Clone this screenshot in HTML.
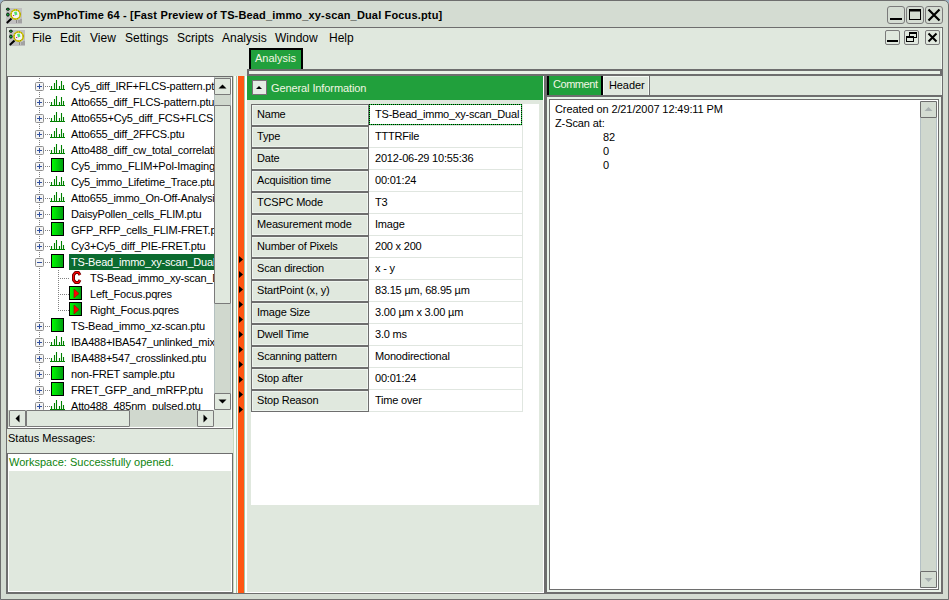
<!DOCTYPE html>
<html><head><meta charset="utf-8">
<style>
*{margin:0;padding:0;box-sizing:border-box}
html,body{width:949px;height:600px;overflow:hidden;background:#9cb4c8}
body{position:relative;font-family:"Liberation Sans",sans-serif;font-size:11px;color:#000}
.a{position:absolute}
.t{position:absolute;white-space:pre;line-height:13px;letter-spacing:-0.2px}
svg{position:absolute;overflow:visible}
</style></head><body>
<div class="a" style="left:0;top:0;width:949px;height:600px;background:#d4dcd2;border:1px solid #6e6e6e;border-radius:5px 5px 0 0"></div>
<svg style="left:4px;top:4px" width="18" height="18" viewBox="0 0 18 18">
<rect x="2" y="4" width="16" height="16" fill="#c0c0c0"/>
<ellipse cx="3.9" cy="5.2" rx="1.5" ry="1.1" fill="#10c040" stroke="#000" stroke-width="0.9"/>
<ellipse cx="3.9" cy="10.6" rx="1.3" ry="1.6" fill="#10c040" stroke="#000" stroke-width="0.9"/>
<line x1="7.5" y1="14.5" x2="2.8" y2="19" stroke="#000" stroke-width="2"/>
<circle cx="11.6" cy="10.5" r="4.6" fill="#f4f4f4" stroke="#d8d000" stroke-width="1.7"/>
<circle cx="11.6" cy="10.5" r="4.6" fill="none" stroke="#504000" stroke-width="0.8" stroke-dasharray="0.8 1.6"/>
<path d="M10 8 L12.5 7.5 L13.5 10.5 L11 11.5Z" fill="#50e070"/>
<rect x="9" y="11" width="1.2" height="1" fill="#c02080"/>
<path d="M12.5 16v3M15 16v3M17 15v4" stroke="#808080" stroke-width="0.9"/>
</svg>
<div class="t" style="left:33px;top:8px;font-weight:bold;letter-spacing:0.16px;line-height:14px">SymPhoTime 64 - [Fast Preview of TS-Bead_immo_xy-scan_Dual Focus.ptu]</div>
<div class="a" style="left:887px;top:6px;width:18px;height:18px;border:1px solid #7a7a7a;border-radius:3px;background:#d4dcd2"></div>
<div class="a" style="left:906px;top:6px;width:18px;height:18px;border:1px solid #7a7a7a;border-radius:3px;background:#d4dcd2"></div>
<div class="a" style="left:925px;top:6px;width:18px;height:18px;border:1px solid #7a7a7a;border-radius:3px;background:#d4dcd2"></div>
<svg style="left:887px;top:6px" width="18" height="18"><rect x="3" y="12" width="12" height="2" fill="#000"/></svg>
<svg style="left:906px;top:6px" width="18" height="18"><rect x="3.5" y="3.5" width="11" height="10" fill="none" stroke="#000" stroke-width="1"/><rect x="3" y="3" width="12" height="2.5" fill="#000"/></svg>
<svg style="left:925px;top:6px" width="18" height="18"><path d="M3.5 3.5 L14.5 14.5 M14.5 3.5 L3.5 14.5" stroke="#000" stroke-width="2.2"/></svg>
<div class="a" style="left:6px;top:27px;width:937px;height:567px;background:#e0e8de;border-left:1px solid #6e6e6e;border-top:1px solid #6e6e6e;border-right:1px solid #6e6e6e;border-bottom:2px solid #6e6e6e;box-shadow:inset -1px 0 #eef6ee"></div>
<svg style="left:7px;top:26px" width="18" height="18" viewBox="0 0 18 18">
<rect x="2" y="4" width="16" height="16" fill="#c0c0c0"/>
<ellipse cx="3.9" cy="5.2" rx="1.5" ry="1.1" fill="#10c040" stroke="#000" stroke-width="0.9"/>
<ellipse cx="3.9" cy="10.6" rx="1.3" ry="1.6" fill="#10c040" stroke="#000" stroke-width="0.9"/>
<line x1="7.5" y1="14.5" x2="2.8" y2="19" stroke="#000" stroke-width="2"/>
<circle cx="11.6" cy="10.5" r="4.6" fill="#f4f4f4" stroke="#d8d000" stroke-width="1.7"/>
<circle cx="11.6" cy="10.5" r="4.6" fill="none" stroke="#504000" stroke-width="0.8" stroke-dasharray="0.8 1.6"/>
<path d="M10 8 L12.5 7.5 L13.5 10.5 L11 11.5Z" fill="#50e070"/>
<rect x="9" y="11" width="1.2" height="1" fill="#c02080"/>
<path d="M12.5 16v3M15 16v3M17 15v4" stroke="#808080" stroke-width="0.9"/>
</svg>
<div class="t" style="left:32px;top:31px;font-size:12px;line-height:15px;letter-spacing:0">File</div>
<div class="t" style="left:60px;top:31px;font-size:12px;line-height:15px;letter-spacing:0">Edit</div>
<div class="t" style="left:90px;top:31px;font-size:12px;line-height:15px;letter-spacing:0">View</div>
<div class="t" style="left:125px;top:31px;font-size:12px;line-height:15px;letter-spacing:0">Settings</div>
<div class="t" style="left:177px;top:31px;font-size:12px;line-height:15px;letter-spacing:0">Scripts</div>
<div class="t" style="left:222px;top:31px;font-size:12px;line-height:15px;letter-spacing:0">Analysis</div>
<div class="t" style="left:275px;top:31px;font-size:12px;line-height:15px;letter-spacing:0">Window</div>
<div class="t" style="left:329px;top:31px;font-size:12px;line-height:15px;letter-spacing:0">Help</div>
<div class="a" style="left:885px;top:30px;width:15px;height:15px;border:1px solid #7a7a7a;border-radius:2px;background:#e0e8de"></div>
<div class="a" style="left:904px;top:30px;width:15px;height:15px;border:1px solid #7a7a7a;border-radius:2px;background:#e0e8de"></div>
<div class="a" style="left:925px;top:30px;width:15px;height:15px;border:1px solid #7a7a7a;border-radius:2px;background:#e0e8de"></div>
<svg style="left:885px;top:30px" width="15" height="15"><rect x="2" y="10" width="11" height="2" fill="#000"/></svg>
<svg style="left:904px;top:30px" width="15" height="15"><rect x="5.5" y="2.5" width="7" height="5" fill="none" stroke="#000"/><rect x="5" y="2" width="8" height="2" fill="#000"/><rect x="2.5" y="6.5" width="7" height="5" fill="#e0e8de" stroke="#000"/><rect x="2" y="6" width="8" height="2" fill="#000"/></svg>
<svg style="left:925px;top:30px" width="15" height="15"><path d="M3.5 3.5 L11.5 11.5 M11.5 3.5 L3.5 11.5" stroke="#000" stroke-width="2"/></svg>
<div class="a" style="left:249px;top:48px;width:54px;height:22px;background:#21a03c;border:2px solid #000;border-bottom:0"></div>
<div class="t" style="left:255px;top:52px;color:#f2f6e4;letter-spacing:0">Analysis</div>
<div class="a" style="left:247px;top:69px;width:695px;height:7px;background:#e8f0e6;border-top:2px solid #6e6e6e;border-left:2px solid #6e6e6e;border-bottom:2px solid #6e6e6e;border-right:2px solid #6e6e6e"></div>
<div class="a" style="left:7px;top:76px;width:226px;height:353px;background:#fff;border:1px solid #6e6e6e"></div>
<div class="a" style="left:8px;top:77px;width:206px;height:333px;overflow:hidden">
<svg style="left:0;top:0" width="206" height="333">
<rect x="31" y="1" width="1" height="1" fill="#808080"/>
<rect x="31" y="3" width="1" height="1" fill="#808080"/>
<rect x="31" y="5" width="1" height="1" fill="#808080"/>
<rect x="31" y="7" width="1" height="1" fill="#808080"/>
<rect x="31" y="9" width="1" height="1" fill="#808080"/>
<rect x="31" y="11" width="1" height="1" fill="#808080"/>
<rect x="31" y="13" width="1" height="1" fill="#808080"/>
<rect x="31" y="15" width="1" height="1" fill="#808080"/>
<rect x="31" y="17" width="1" height="1" fill="#808080"/>
<rect x="31" y="19" width="1" height="1" fill="#808080"/>
<rect x="31" y="21" width="1" height="1" fill="#808080"/>
<rect x="31" y="23" width="1" height="1" fill="#808080"/>
<rect x="31" y="25" width="1" height="1" fill="#808080"/>
<rect x="31" y="27" width="1" height="1" fill="#808080"/>
<rect x="31" y="29" width="1" height="1" fill="#808080"/>
<rect x="31" y="31" width="1" height="1" fill="#808080"/>
<rect x="31" y="33" width="1" height="1" fill="#808080"/>
<rect x="31" y="35" width="1" height="1" fill="#808080"/>
<rect x="31" y="37" width="1" height="1" fill="#808080"/>
<rect x="31" y="39" width="1" height="1" fill="#808080"/>
<rect x="31" y="41" width="1" height="1" fill="#808080"/>
<rect x="31" y="43" width="1" height="1" fill="#808080"/>
<rect x="31" y="45" width="1" height="1" fill="#808080"/>
<rect x="31" y="47" width="1" height="1" fill="#808080"/>
<rect x="31" y="49" width="1" height="1" fill="#808080"/>
<rect x="31" y="51" width="1" height="1" fill="#808080"/>
<rect x="31" y="53" width="1" height="1" fill="#808080"/>
<rect x="31" y="55" width="1" height="1" fill="#808080"/>
<rect x="31" y="57" width="1" height="1" fill="#808080"/>
<rect x="31" y="59" width="1" height="1" fill="#808080"/>
<rect x="31" y="61" width="1" height="1" fill="#808080"/>
<rect x="31" y="63" width="1" height="1" fill="#808080"/>
<rect x="31" y="65" width="1" height="1" fill="#808080"/>
<rect x="31" y="67" width="1" height="1" fill="#808080"/>
<rect x="31" y="69" width="1" height="1" fill="#808080"/>
<rect x="31" y="71" width="1" height="1" fill="#808080"/>
<rect x="31" y="73" width="1" height="1" fill="#808080"/>
<rect x="31" y="75" width="1" height="1" fill="#808080"/>
<rect x="31" y="77" width="1" height="1" fill="#808080"/>
<rect x="31" y="79" width="1" height="1" fill="#808080"/>
<rect x="31" y="81" width="1" height="1" fill="#808080"/>
<rect x="31" y="83" width="1" height="1" fill="#808080"/>
<rect x="31" y="85" width="1" height="1" fill="#808080"/>
<rect x="31" y="87" width="1" height="1" fill="#808080"/>
<rect x="31" y="89" width="1" height="1" fill="#808080"/>
<rect x="31" y="91" width="1" height="1" fill="#808080"/>
<rect x="31" y="93" width="1" height="1" fill="#808080"/>
<rect x="31" y="95" width="1" height="1" fill="#808080"/>
<rect x="31" y="97" width="1" height="1" fill="#808080"/>
<rect x="31" y="99" width="1" height="1" fill="#808080"/>
<rect x="31" y="101" width="1" height="1" fill="#808080"/>
<rect x="31" y="103" width="1" height="1" fill="#808080"/>
<rect x="31" y="105" width="1" height="1" fill="#808080"/>
<rect x="31" y="107" width="1" height="1" fill="#808080"/>
<rect x="31" y="109" width="1" height="1" fill="#808080"/>
<rect x="31" y="111" width="1" height="1" fill="#808080"/>
<rect x="31" y="113" width="1" height="1" fill="#808080"/>
<rect x="31" y="115" width="1" height="1" fill="#808080"/>
<rect x="31" y="117" width="1" height="1" fill="#808080"/>
<rect x="31" y="119" width="1" height="1" fill="#808080"/>
<rect x="31" y="121" width="1" height="1" fill="#808080"/>
<rect x="31" y="123" width="1" height="1" fill="#808080"/>
<rect x="31" y="125" width="1" height="1" fill="#808080"/>
<rect x="31" y="127" width="1" height="1" fill="#808080"/>
<rect x="31" y="129" width="1" height="1" fill="#808080"/>
<rect x="31" y="131" width="1" height="1" fill="#808080"/>
<rect x="31" y="133" width="1" height="1" fill="#808080"/>
<rect x="31" y="135" width="1" height="1" fill="#808080"/>
<rect x="31" y="137" width="1" height="1" fill="#808080"/>
<rect x="31" y="139" width="1" height="1" fill="#808080"/>
<rect x="31" y="141" width="1" height="1" fill="#808080"/>
<rect x="31" y="143" width="1" height="1" fill="#808080"/>
<rect x="31" y="145" width="1" height="1" fill="#808080"/>
<rect x="31" y="147" width="1" height="1" fill="#808080"/>
<rect x="31" y="149" width="1" height="1" fill="#808080"/>
<rect x="31" y="151" width="1" height="1" fill="#808080"/>
<rect x="31" y="153" width="1" height="1" fill="#808080"/>
<rect x="31" y="155" width="1" height="1" fill="#808080"/>
<rect x="31" y="157" width="1" height="1" fill="#808080"/>
<rect x="31" y="159" width="1" height="1" fill="#808080"/>
<rect x="31" y="161" width="1" height="1" fill="#808080"/>
<rect x="31" y="163" width="1" height="1" fill="#808080"/>
<rect x="31" y="165" width="1" height="1" fill="#808080"/>
<rect x="31" y="167" width="1" height="1" fill="#808080"/>
<rect x="31" y="169" width="1" height="1" fill="#808080"/>
<rect x="31" y="171" width="1" height="1" fill="#808080"/>
<rect x="31" y="173" width="1" height="1" fill="#808080"/>
<rect x="31" y="175" width="1" height="1" fill="#808080"/>
<rect x="31" y="177" width="1" height="1" fill="#808080"/>
<rect x="31" y="179" width="1" height="1" fill="#808080"/>
<rect x="31" y="181" width="1" height="1" fill="#808080"/>
<rect x="31" y="183" width="1" height="1" fill="#808080"/>
<rect x="31" y="185" width="1" height="1" fill="#808080"/>
<rect x="31" y="187" width="1" height="1" fill="#808080"/>
<rect x="31" y="189" width="1" height="1" fill="#808080"/>
<rect x="31" y="191" width="1" height="1" fill="#808080"/>
<rect x="31" y="193" width="1" height="1" fill="#808080"/>
<rect x="31" y="195" width="1" height="1" fill="#808080"/>
<rect x="31" y="197" width="1" height="1" fill="#808080"/>
<rect x="31" y="199" width="1" height="1" fill="#808080"/>
<rect x="31" y="201" width="1" height="1" fill="#808080"/>
<rect x="31" y="203" width="1" height="1" fill="#808080"/>
<rect x="31" y="205" width="1" height="1" fill="#808080"/>
<rect x="31" y="207" width="1" height="1" fill="#808080"/>
<rect x="31" y="209" width="1" height="1" fill="#808080"/>
<rect x="31" y="211" width="1" height="1" fill="#808080"/>
<rect x="31" y="213" width="1" height="1" fill="#808080"/>
<rect x="31" y="215" width="1" height="1" fill="#808080"/>
<rect x="31" y="217" width="1" height="1" fill="#808080"/>
<rect x="31" y="219" width="1" height="1" fill="#808080"/>
<rect x="31" y="221" width="1" height="1" fill="#808080"/>
<rect x="31" y="223" width="1" height="1" fill="#808080"/>
<rect x="31" y="225" width="1" height="1" fill="#808080"/>
<rect x="31" y="227" width="1" height="1" fill="#808080"/>
<rect x="31" y="229" width="1" height="1" fill="#808080"/>
<rect x="31" y="231" width="1" height="1" fill="#808080"/>
<rect x="31" y="233" width="1" height="1" fill="#808080"/>
<rect x="31" y="235" width="1" height="1" fill="#808080"/>
<rect x="31" y="237" width="1" height="1" fill="#808080"/>
<rect x="31" y="239" width="1" height="1" fill="#808080"/>
<rect x="31" y="241" width="1" height="1" fill="#808080"/>
<rect x="31" y="243" width="1" height="1" fill="#808080"/>
<rect x="31" y="245" width="1" height="1" fill="#808080"/>
<rect x="31" y="247" width="1" height="1" fill="#808080"/>
<rect x="31" y="249" width="1" height="1" fill="#808080"/>
<rect x="31" y="251" width="1" height="1" fill="#808080"/>
<rect x="31" y="253" width="1" height="1" fill="#808080"/>
<rect x="31" y="255" width="1" height="1" fill="#808080"/>
<rect x="31" y="257" width="1" height="1" fill="#808080"/>
<rect x="31" y="259" width="1" height="1" fill="#808080"/>
<rect x="31" y="261" width="1" height="1" fill="#808080"/>
<rect x="31" y="263" width="1" height="1" fill="#808080"/>
<rect x="31" y="265" width="1" height="1" fill="#808080"/>
<rect x="31" y="267" width="1" height="1" fill="#808080"/>
<rect x="31" y="269" width="1" height="1" fill="#808080"/>
<rect x="31" y="271" width="1" height="1" fill="#808080"/>
<rect x="31" y="273" width="1" height="1" fill="#808080"/>
<rect x="31" y="275" width="1" height="1" fill="#808080"/>
<rect x="31" y="277" width="1" height="1" fill="#808080"/>
<rect x="31" y="279" width="1" height="1" fill="#808080"/>
<rect x="31" y="281" width="1" height="1" fill="#808080"/>
<rect x="31" y="283" width="1" height="1" fill="#808080"/>
<rect x="31" y="285" width="1" height="1" fill="#808080"/>
<rect x="31" y="287" width="1" height="1" fill="#808080"/>
<rect x="31" y="289" width="1" height="1" fill="#808080"/>
<rect x="31" y="291" width="1" height="1" fill="#808080"/>
<rect x="31" y="293" width="1" height="1" fill="#808080"/>
<rect x="31" y="295" width="1" height="1" fill="#808080"/>
<rect x="31" y="297" width="1" height="1" fill="#808080"/>
<rect x="31" y="299" width="1" height="1" fill="#808080"/>
<rect x="31" y="301" width="1" height="1" fill="#808080"/>
<rect x="31" y="303" width="1" height="1" fill="#808080"/>
<rect x="31" y="305" width="1" height="1" fill="#808080"/>
<rect x="31" y="307" width="1" height="1" fill="#808080"/>
<rect x="31" y="309" width="1" height="1" fill="#808080"/>
<rect x="31" y="311" width="1" height="1" fill="#808080"/>
<rect x="31" y="313" width="1" height="1" fill="#808080"/>
<rect x="31" y="315" width="1" height="1" fill="#808080"/>
<rect x="31" y="317" width="1" height="1" fill="#808080"/>
<rect x="31" y="319" width="1" height="1" fill="#808080"/>
<rect x="31" y="321" width="1" height="1" fill="#808080"/>
<rect x="31" y="323" width="1" height="1" fill="#808080"/>
<rect x="31" y="325" width="1" height="1" fill="#808080"/>
<rect x="31" y="327" width="1" height="1" fill="#808080"/>
<rect x="31" y="329" width="1" height="1" fill="#808080"/>
<rect x="31" y="331" width="1" height="1" fill="#808080"/>
<rect x="50" y="193" width="1" height="1" fill="#808080"/>
<rect x="50" y="195" width="1" height="1" fill="#808080"/>
<rect x="50" y="197" width="1" height="1" fill="#808080"/>
<rect x="50" y="199" width="1" height="1" fill="#808080"/>
<rect x="50" y="201" width="1" height="1" fill="#808080"/>
<rect x="50" y="203" width="1" height="1" fill="#808080"/>
<rect x="50" y="205" width="1" height="1" fill="#808080"/>
<rect x="50" y="207" width="1" height="1" fill="#808080"/>
<rect x="50" y="209" width="1" height="1" fill="#808080"/>
<rect x="50" y="211" width="1" height="1" fill="#808080"/>
<rect x="50" y="213" width="1" height="1" fill="#808080"/>
<rect x="50" y="215" width="1" height="1" fill="#808080"/>
<rect x="50" y="217" width="1" height="1" fill="#808080"/>
<rect x="50" y="219" width="1" height="1" fill="#808080"/>
<rect x="50" y="221" width="1" height="1" fill="#808080"/>
<rect x="50" y="223" width="1" height="1" fill="#808080"/>
<rect x="50" y="225" width="1" height="1" fill="#808080"/>
<rect x="50" y="227" width="1" height="1" fill="#808080"/>
<rect x="50" y="229" width="1" height="1" fill="#808080"/>
<rect x="50" y="231" width="1" height="1" fill="#808080"/>
<rect x="50" y="233" width="1" height="1" fill="#808080"/>
</svg>
<svg style="left:37px;top:9px" width="6" height="1"><rect x="0" y="0" width="1" height="1" fill="#808080"/><rect x="2" y="0" width="1" height="1" fill="#808080"/><rect x="4" y="0" width="1" height="1" fill="#808080"/></svg>
<svg style="left:27px;top:5px" width="9" height="9"><rect x="0.5" y="0.5" width="8" height="8" rx="1" fill="#f4f4f4" stroke="#909090"/><rect x="2" y="4" width="5" height="1" fill="#3050a0"/><rect x="4" y="2" width="1" height="5" fill="#3050a0"/></svg>
<svg style="left:42px;top:3px" width="16" height="12"><path d="M0 9.5H15M1.5 10V6M4.5 10V3M6.5 10V0M9.5 10V6M11.5 10V1M13.5 10V5" stroke="#008000" stroke-width="1.1" fill="none"/></svg>
<div class="t" style="left:63px;top:3px;">Cy5_diff_IRF+FLCS-pattern.ptu</div>
<svg style="left:37px;top:25px" width="6" height="1"><rect x="0" y="0" width="1" height="1" fill="#808080"/><rect x="2" y="0" width="1" height="1" fill="#808080"/><rect x="4" y="0" width="1" height="1" fill="#808080"/></svg>
<svg style="left:27px;top:21px" width="9" height="9"><rect x="0.5" y="0.5" width="8" height="8" rx="1" fill="#f4f4f4" stroke="#909090"/><rect x="2" y="4" width="5" height="1" fill="#3050a0"/><rect x="4" y="2" width="1" height="5" fill="#3050a0"/></svg>
<svg style="left:42px;top:19px" width="16" height="12"><path d="M0 9.5H15M1.5 10V6M4.5 10V3M6.5 10V0M9.5 10V6M11.5 10V1M13.5 10V5" stroke="#008000" stroke-width="1.1" fill="none"/></svg>
<div class="t" style="left:63px;top:19px;">Atto655_diff_FLCS-pattern.ptu</div>
<svg style="left:37px;top:41px" width="6" height="1"><rect x="0" y="0" width="1" height="1" fill="#808080"/><rect x="2" y="0" width="1" height="1" fill="#808080"/><rect x="4" y="0" width="1" height="1" fill="#808080"/></svg>
<svg style="left:27px;top:37px" width="9" height="9"><rect x="0.5" y="0.5" width="8" height="8" rx="1" fill="#f4f4f4" stroke="#909090"/><rect x="2" y="4" width="5" height="1" fill="#3050a0"/><rect x="4" y="2" width="1" height="5" fill="#3050a0"/></svg>
<svg style="left:42px;top:35px" width="16" height="12"><path d="M0 9.5H15M1.5 10V6M4.5 10V3M6.5 10V0M9.5 10V6M11.5 10V1M13.5 10V5" stroke="#008000" stroke-width="1.1" fill="none"/></svg>
<div class="t" style="left:63px;top:35px;">Atto655+Cy5_diff_FCS+FLCS.ptu</div>
<svg style="left:37px;top:57px" width="6" height="1"><rect x="0" y="0" width="1" height="1" fill="#808080"/><rect x="2" y="0" width="1" height="1" fill="#808080"/><rect x="4" y="0" width="1" height="1" fill="#808080"/></svg>
<svg style="left:27px;top:53px" width="9" height="9"><rect x="0.5" y="0.5" width="8" height="8" rx="1" fill="#f4f4f4" stroke="#909090"/><rect x="2" y="4" width="5" height="1" fill="#3050a0"/><rect x="4" y="2" width="1" height="5" fill="#3050a0"/></svg>
<svg style="left:42px;top:51px" width="16" height="12"><path d="M0 9.5H15M1.5 10V6M4.5 10V3M6.5 10V0M9.5 10V6M11.5 10V1M13.5 10V5" stroke="#008000" stroke-width="1.1" fill="none"/></svg>
<div class="t" style="left:63px;top:51px;">Atto655_diff_2FFCS.ptu</div>
<svg style="left:37px;top:73px" width="6" height="1"><rect x="0" y="0" width="1" height="1" fill="#808080"/><rect x="2" y="0" width="1" height="1" fill="#808080"/><rect x="4" y="0" width="1" height="1" fill="#808080"/></svg>
<svg style="left:27px;top:69px" width="9" height="9"><rect x="0.5" y="0.5" width="8" height="8" rx="1" fill="#f4f4f4" stroke="#909090"/><rect x="2" y="4" width="5" height="1" fill="#3050a0"/><rect x="4" y="2" width="1" height="5" fill="#3050a0"/></svg>
<svg style="left:42px;top:67px" width="16" height="12"><path d="M0 9.5H15M1.5 10V6M4.5 10V3M6.5 10V0M9.5 10V6M11.5 10V1M13.5 10V5" stroke="#008000" stroke-width="1.1" fill="none"/></svg>
<div class="t" style="left:63px;top:67px;">Atto488_diff_cw_total_correlation.ptu</div>
<svg style="left:37px;top:89px" width="6" height="1"><rect x="0" y="0" width="1" height="1" fill="#808080"/><rect x="2" y="0" width="1" height="1" fill="#808080"/><rect x="4" y="0" width="1" height="1" fill="#808080"/></svg>
<svg style="left:27px;top:85px" width="9" height="9"><rect x="0.5" y="0.5" width="8" height="8" rx="1" fill="#f4f4f4" stroke="#909090"/><rect x="2" y="4" width="5" height="1" fill="#3050a0"/><rect x="4" y="2" width="1" height="5" fill="#3050a0"/></svg>
<svg style="left:43px;top:81px" width="13" height="14"><defs><linearGradient id="g" x1="0" y1="0" x2="1" y2="0"><stop offset="0" stop-color="#00ff00"/><stop offset="1" stop-color="#009c10"/></linearGradient></defs><rect x="0.5" y="0.5" width="12" height="13" fill="url(#g)" stroke="#000"/></svg>
<div class="t" style="left:63px;top:83px;">Cy5_immo_FLIM+Pol-Imaging.ptu</div>
<svg style="left:37px;top:105px" width="6" height="1"><rect x="0" y="0" width="1" height="1" fill="#808080"/><rect x="2" y="0" width="1" height="1" fill="#808080"/><rect x="4" y="0" width="1" height="1" fill="#808080"/></svg>
<svg style="left:27px;top:101px" width="9" height="9"><rect x="0.5" y="0.5" width="8" height="8" rx="1" fill="#f4f4f4" stroke="#909090"/><rect x="2" y="4" width="5" height="1" fill="#3050a0"/><rect x="4" y="2" width="1" height="5" fill="#3050a0"/></svg>
<svg style="left:42px;top:99px" width="16" height="12"><path d="M0 9.5H15M1.5 10V6M4.5 10V3M6.5 10V0M9.5 10V6M11.5 10V1M13.5 10V5" stroke="#008000" stroke-width="1.1" fill="none"/></svg>
<div class="t" style="left:63px;top:99px;">Cy5_immo_Lifetime_Trace.ptu</div>
<svg style="left:37px;top:121px" width="6" height="1"><rect x="0" y="0" width="1" height="1" fill="#808080"/><rect x="2" y="0" width="1" height="1" fill="#808080"/><rect x="4" y="0" width="1" height="1" fill="#808080"/></svg>
<svg style="left:27px;top:117px" width="9" height="9"><rect x="0.5" y="0.5" width="8" height="8" rx="1" fill="#f4f4f4" stroke="#909090"/><rect x="2" y="4" width="5" height="1" fill="#3050a0"/><rect x="4" y="2" width="1" height="5" fill="#3050a0"/></svg>
<svg style="left:42px;top:115px" width="16" height="12"><path d="M0 9.5H15M1.5 10V6M4.5 10V3M6.5 10V0M9.5 10V6M11.5 10V1M13.5 10V5" stroke="#008000" stroke-width="1.1" fill="none"/></svg>
<div class="t" style="left:63px;top:115px;">Atto655_immo_On-Off-Analysis.ptu</div>
<svg style="left:37px;top:137px" width="6" height="1"><rect x="0" y="0" width="1" height="1" fill="#808080"/><rect x="2" y="0" width="1" height="1" fill="#808080"/><rect x="4" y="0" width="1" height="1" fill="#808080"/></svg>
<svg style="left:27px;top:133px" width="9" height="9"><rect x="0.5" y="0.5" width="8" height="8" rx="1" fill="#f4f4f4" stroke="#909090"/><rect x="2" y="4" width="5" height="1" fill="#3050a0"/><rect x="4" y="2" width="1" height="5" fill="#3050a0"/></svg>
<svg style="left:43px;top:129px" width="13" height="14"><defs><linearGradient id="g" x1="0" y1="0" x2="1" y2="0"><stop offset="0" stop-color="#00ff00"/><stop offset="1" stop-color="#009c10"/></linearGradient></defs><rect x="0.5" y="0.5" width="12" height="13" fill="url(#g)" stroke="#000"/></svg>
<div class="t" style="left:63px;top:131px;">DaisyPollen_cells_FLIM.ptu</div>
<svg style="left:37px;top:153px" width="6" height="1"><rect x="0" y="0" width="1" height="1" fill="#808080"/><rect x="2" y="0" width="1" height="1" fill="#808080"/><rect x="4" y="0" width="1" height="1" fill="#808080"/></svg>
<svg style="left:27px;top:149px" width="9" height="9"><rect x="0.5" y="0.5" width="8" height="8" rx="1" fill="#f4f4f4" stroke="#909090"/><rect x="2" y="4" width="5" height="1" fill="#3050a0"/><rect x="4" y="2" width="1" height="5" fill="#3050a0"/></svg>
<svg style="left:43px;top:145px" width="13" height="14"><defs><linearGradient id="g" x1="0" y1="0" x2="1" y2="0"><stop offset="0" stop-color="#00ff00"/><stop offset="1" stop-color="#009c10"/></linearGradient></defs><rect x="0.5" y="0.5" width="12" height="13" fill="url(#g)" stroke="#000"/></svg>
<div class="t" style="left:63px;top:147px;">GFP_RFP_cells_FLIM-FRET.ptu</div>
<svg style="left:37px;top:169px" width="6" height="1"><rect x="0" y="0" width="1" height="1" fill="#808080"/><rect x="2" y="0" width="1" height="1" fill="#808080"/><rect x="4" y="0" width="1" height="1" fill="#808080"/></svg>
<svg style="left:27px;top:165px" width="9" height="9"><rect x="0.5" y="0.5" width="8" height="8" rx="1" fill="#f4f4f4" stroke="#909090"/><rect x="2" y="4" width="5" height="1" fill="#3050a0"/><rect x="4" y="2" width="1" height="5" fill="#3050a0"/></svg>
<svg style="left:42px;top:163px" width="16" height="12"><path d="M0 9.5H15M1.5 10V6M4.5 10V3M6.5 10V0M9.5 10V6M11.5 10V1M13.5 10V5" stroke="#008000" stroke-width="1.1" fill="none"/></svg>
<div class="t" style="left:63px;top:163px;">Cy3+Cy5_diff_PIE-FRET.ptu</div>
<svg style="left:37px;top:185px" width="6" height="1"><rect x="0" y="0" width="1" height="1" fill="#808080"/><rect x="2" y="0" width="1" height="1" fill="#808080"/><rect x="4" y="0" width="1" height="1" fill="#808080"/></svg>
<svg style="left:27px;top:181px" width="9" height="9"><rect x="0.5" y="0.5" width="8" height="8" rx="1" fill="#f4f4f4" stroke="#909090"/><rect x="2" y="4" width="5" height="1" fill="#3050a0"/></svg>
<svg style="left:43px;top:177px" width="13" height="14"><defs><linearGradient id="g" x1="0" y1="0" x2="1" y2="0"><stop offset="0" stop-color="#00ff00"/><stop offset="1" stop-color="#009c10"/></linearGradient></defs><rect x="0.5" y="0.5" width="12" height="13" fill="url(#g)" stroke="#000"/></svg>
<div class="a" style="left:61px;top:177px;width:145px;height:16px;background:#0c6b30;"></div>
<div class="t" style="left:63px;top:179px;color:#fff">TS-Bead_immo_xy-scan_Dual Focus.ptu</div>
<svg style="left:52px;top:201px" width="10" height="1"><rect x="0" y="0" width="1" height="1" fill="#808080"/><rect x="2" y="0" width="1" height="1" fill="#808080"/><rect x="4" y="0" width="1" height="1" fill="#808080"/><rect x="6" y="0" width="1" height="1" fill="#808080"/><rect x="8" y="0" width="1" height="1" fill="#808080"/></svg>
<svg style="left:63px;top:194px" width="12" height="14"><path d="M9 4 L7.5 1.5 L4.5 1.5 L2.5 4 L2.5 9 L4.5 11.5 L7.5 11.5 L9 9" stroke="#700000" stroke-width="3" fill="none" stroke-linejoin="round"/><path d="M9 4 L7.5 1.5 L4.5 1.5 L2.5 4 L2.5 9 L4.5 11.5 L7.5 11.5 L9 9" stroke="#ff0000" stroke-width="1.1" fill="none"/></svg>
<div class="t" style="left:82px;top:195px;">TS-Bead_immo_xy-scan_Dual Focus.pcfs</div>
<svg style="left:52px;top:217px" width="10" height="1"><rect x="0" y="0" width="1" height="1" fill="#808080"/><rect x="2" y="0" width="1" height="1" fill="#808080"/><rect x="4" y="0" width="1" height="1" fill="#808080"/><rect x="6" y="0" width="1" height="1" fill="#808080"/><rect x="8" y="0" width="1" height="1" fill="#808080"/></svg>
<svg style="left:61px;top:209px" width="13" height="14"><defs><linearGradient id="g2" x1="0" y1="0" x2="1" y2="0"><stop offset="0" stop-color="#00ff00"/><stop offset="1" stop-color="#009c10"/></linearGradient></defs><rect x="0.5" y="0.5" width="12" height="13" fill="url(#g2)" stroke="#000"/><path d="M5 3 L10 7.5 L5 12Z" fill="#ff0000" stroke="#a00000" stroke-width="0.6"/></svg>
<div class="t" style="left:82px;top:211px;">Left_Focus.pqres</div>
<svg style="left:52px;top:233px" width="10" height="1"><rect x="0" y="0" width="1" height="1" fill="#808080"/><rect x="2" y="0" width="1" height="1" fill="#808080"/><rect x="4" y="0" width="1" height="1" fill="#808080"/><rect x="6" y="0" width="1" height="1" fill="#808080"/><rect x="8" y="0" width="1" height="1" fill="#808080"/></svg>
<svg style="left:61px;top:225px" width="13" height="14"><defs><linearGradient id="g2" x1="0" y1="0" x2="1" y2="0"><stop offset="0" stop-color="#00ff00"/><stop offset="1" stop-color="#009c10"/></linearGradient></defs><rect x="0.5" y="0.5" width="12" height="13" fill="url(#g2)" stroke="#000"/><path d="M5 3 L10 7.5 L5 12Z" fill="#ff0000" stroke="#a00000" stroke-width="0.6"/></svg>
<div class="t" style="left:82px;top:227px;">Right_Focus.pqres</div>
<svg style="left:37px;top:249px" width="6" height="1"><rect x="0" y="0" width="1" height="1" fill="#808080"/><rect x="2" y="0" width="1" height="1" fill="#808080"/><rect x="4" y="0" width="1" height="1" fill="#808080"/></svg>
<svg style="left:27px;top:245px" width="9" height="9"><rect x="0.5" y="0.5" width="8" height="8" rx="1" fill="#f4f4f4" stroke="#909090"/><rect x="2" y="4" width="5" height="1" fill="#3050a0"/><rect x="4" y="2" width="1" height="5" fill="#3050a0"/></svg>
<svg style="left:43px;top:241px" width="13" height="14"><defs><linearGradient id="g" x1="0" y1="0" x2="1" y2="0"><stop offset="0" stop-color="#00ff00"/><stop offset="1" stop-color="#009c10"/></linearGradient></defs><rect x="0.5" y="0.5" width="12" height="13" fill="url(#g)" stroke="#000"/></svg>
<div class="t" style="left:63px;top:243px;">TS-Bead_immo_xz-scan.ptu</div>
<svg style="left:37px;top:265px" width="6" height="1"><rect x="0" y="0" width="1" height="1" fill="#808080"/><rect x="2" y="0" width="1" height="1" fill="#808080"/><rect x="4" y="0" width="1" height="1" fill="#808080"/></svg>
<svg style="left:27px;top:261px" width="9" height="9"><rect x="0.5" y="0.5" width="8" height="8" rx="1" fill="#f4f4f4" stroke="#909090"/><rect x="2" y="4" width="5" height="1" fill="#3050a0"/><rect x="4" y="2" width="1" height="5" fill="#3050a0"/></svg>
<svg style="left:42px;top:259px" width="16" height="12"><path d="M0 9.5H15M1.5 10V6M4.5 10V3M6.5 10V0M9.5 10V6M11.5 10V1M13.5 10V5" stroke="#008000" stroke-width="1.1" fill="none"/></svg>
<div class="t" style="left:63px;top:259px;">IBA488+IBA547_unlinked_mix.ptu</div>
<svg style="left:37px;top:281px" width="6" height="1"><rect x="0" y="0" width="1" height="1" fill="#808080"/><rect x="2" y="0" width="1" height="1" fill="#808080"/><rect x="4" y="0" width="1" height="1" fill="#808080"/></svg>
<svg style="left:27px;top:277px" width="9" height="9"><rect x="0.5" y="0.5" width="8" height="8" rx="1" fill="#f4f4f4" stroke="#909090"/><rect x="2" y="4" width="5" height="1" fill="#3050a0"/><rect x="4" y="2" width="1" height="5" fill="#3050a0"/></svg>
<svg style="left:42px;top:275px" width="16" height="12"><path d="M0 9.5H15M1.5 10V6M4.5 10V3M6.5 10V0M9.5 10V6M11.5 10V1M13.5 10V5" stroke="#008000" stroke-width="1.1" fill="none"/></svg>
<div class="t" style="left:63px;top:275px;">IBA488+547_crosslinked.ptu</div>
<svg style="left:37px;top:297px" width="6" height="1"><rect x="0" y="0" width="1" height="1" fill="#808080"/><rect x="2" y="0" width="1" height="1" fill="#808080"/><rect x="4" y="0" width="1" height="1" fill="#808080"/></svg>
<svg style="left:27px;top:293px" width="9" height="9"><rect x="0.5" y="0.5" width="8" height="8" rx="1" fill="#f4f4f4" stroke="#909090"/><rect x="2" y="4" width="5" height="1" fill="#3050a0"/><rect x="4" y="2" width="1" height="5" fill="#3050a0"/></svg>
<svg style="left:43px;top:289px" width="13" height="14"><defs><linearGradient id="g" x1="0" y1="0" x2="1" y2="0"><stop offset="0" stop-color="#00ff00"/><stop offset="1" stop-color="#009c10"/></linearGradient></defs><rect x="0.5" y="0.5" width="12" height="13" fill="url(#g)" stroke="#000"/></svg>
<div class="t" style="left:63px;top:291px;">non-FRET sample.ptu</div>
<svg style="left:37px;top:313px" width="6" height="1"><rect x="0" y="0" width="1" height="1" fill="#808080"/><rect x="2" y="0" width="1" height="1" fill="#808080"/><rect x="4" y="0" width="1" height="1" fill="#808080"/></svg>
<svg style="left:27px;top:309px" width="9" height="9"><rect x="0.5" y="0.5" width="8" height="8" rx="1" fill="#f4f4f4" stroke="#909090"/><rect x="2" y="4" width="5" height="1" fill="#3050a0"/><rect x="4" y="2" width="1" height="5" fill="#3050a0"/></svg>
<svg style="left:43px;top:305px" width="13" height="14"><defs><linearGradient id="g" x1="0" y1="0" x2="1" y2="0"><stop offset="0" stop-color="#00ff00"/><stop offset="1" stop-color="#009c10"/></linearGradient></defs><rect x="0.5" y="0.5" width="12" height="13" fill="url(#g)" stroke="#000"/></svg>
<div class="t" style="left:63px;top:307px;">FRET_GFP_and_mRFP.ptu</div>
<svg style="left:37px;top:329px" width="6" height="1"><rect x="0" y="0" width="1" height="1" fill="#808080"/><rect x="2" y="0" width="1" height="1" fill="#808080"/><rect x="4" y="0" width="1" height="1" fill="#808080"/></svg>
<svg style="left:27px;top:325px" width="9" height="9"><rect x="0.5" y="0.5" width="8" height="8" rx="1" fill="#f4f4f4" stroke="#909090"/><rect x="2" y="4" width="5" height="1" fill="#3050a0"/><rect x="4" y="2" width="1" height="5" fill="#3050a0"/></svg>
<svg style="left:42px;top:323px" width="16" height="12"><path d="M0 9.5H15M1.5 10V6M4.5 10V3M6.5 10V0M9.5 10V6M11.5 10V1M13.5 10V5" stroke="#008000" stroke-width="1.1" fill="none"/></svg>
<div class="t" style="left:63px;top:323px;">Atto488_485nm_pulsed.ptu</div>
</div>
<div class="a" style="left:214px;top:77px;width:17px;height:333px;background:#d0d8ce;border-left:1px solid #b4c0c0;border-right:1px solid #b4c0c0"></div>
<div class="a" style="left:214px;top:78px;width:17px;height:17px;background:#e0e8de;border:1px solid #7a7a7a;border-radius:1px"></div>
<svg style="left:214px;top:78px" width="17" height="17"><path d="M4.5 10.5 L8.5 6.5 L12.5 10.5Z" fill="#000"/></svg>
<div class="a" style="left:214px;top:105px;width:17px;height:199px;background:#e0e8de;border:1px solid #7a7a7a;border-radius:1px"></div>
<svg style="left:214px;top:105px" width="17" height="199"><path d="" fill="#000"/></svg>
<div class="a" style="left:214px;top:393px;width:17px;height:17px;background:#e0e8de;border:1px solid #7a7a7a;border-radius:1px"></div>
<svg style="left:214px;top:393px" width="17" height="17"><path d="M4.5 6.5 L8.5 10.5 L12.5 6.5Z" fill="#000"/></svg>
<div class="a" style="left:8px;top:410px;width:206px;height:17px;background:#d0d8ce"></div>
<div class="a" style="left:9px;top:410px;width:17px;height:17px;background:#e0e8de;border:1px solid #7a7a7a;border-radius:1px"></div>
<svg style="left:9px;top:410px" width="17" height="17"><path d="M10.5 4.5 L6.5 8.5 L10.5 12.5Z" fill="#000"/></svg>
<div class="a" style="left:26px;top:410px;width:104px;height:17px;background:#e0e8de;border:1px solid #7a7a7a;border-radius:1px"></div>
<svg style="left:26px;top:410px" width="104" height="17"><path d="" fill="#000"/></svg>
<div class="a" style="left:197px;top:410px;width:17px;height:17px;background:#e0e8de;border:1px solid #7a7a7a;border-radius:1px"></div>
<svg style="left:197px;top:410px" width="17" height="17"><path d="M6.5 4.5 L10.5 8.5 L6.5 12.5Z" fill="#000"/></svg>
<div class="a" style="left:214px;top:410px;width:17px;height:17px;background:#e0e8de;"></div>
<div class="t" style="left:8px;top:432px;letter-spacing:0">Status Messages:</div>
<div class="a" style="left:7px;top:453px;width:226px;height:141px;background:#e0e8de;border:1px solid #6e6e6e;border-bottom:2px solid #6e6e6e;box-shadow:inset 1px 0 #fff,inset -1px -1px #fff"></div>
<div class="a" style="left:8px;top:454px;width:224px;height:17px;background:#fff;"></div>
<div class="t" style="left:9px;top:456px;color:#0e840e;letter-spacing:0">Workspace: Successfully opened.</div>
<div class="a" style="left:233px;top:76px;width:1px;height:517px;background:#c8d8c0;"></div>
<div class="a" style="left:234px;top:76px;width:2px;height:517px;background:#f8fcf8;"></div>
<div class="a" style="left:236px;top:76px;width:1px;height:517px;background:#a8c0a0;"></div>
<div class="a" style="left:237px;top:76px;width:1px;height:517px;background:#f0f8f0;"></div>
<div class="a" style="left:238px;top:76px;width:6px;height:517px;background:#ff5714;"></div>
<div class="a" style="left:244px;top:76px;width:1px;height:517px;background:#a8c8a8;"></div>
<div class="a" style="left:245px;top:76px;width:2px;height:517px;background:#fff;"></div>
<svg style="left:238px;top:0" width="6" height="600"><path d="M1 255.9 L5 259.5 L1 263.1Z" fill="#000"/><path d="M1 270.9 L5 274.5 L1 278.1Z" fill="#000"/><path d="M1 285.9 L5 289.5 L1 293.1Z" fill="#000"/><path d="M1 300.9 L5 304.5 L1 308.1Z" fill="#000"/><path d="M1 315.9 L5 319.5 L1 323.1Z" fill="#000"/><path d="M1 330.9 L5 334.5 L1 338.1Z" fill="#000"/><path d="M1 345.9 L5 349.5 L1 353.1Z" fill="#000"/><path d="M1 360.9 L5 364.5 L1 368.1Z" fill="#000"/><path d="M1 375.9 L5 379.5 L1 383.1Z" fill="#000"/><path d="M1 390.9 L5 394.5 L1 398.1Z" fill="#000"/><path d="M1 405.9 L5 409.5 L1 413.1Z" fill="#000"/></svg>
<div class="a" style="left:247px;top:76px;width:297px;height:517px;background:#e0e8de;"></div>
<div class="a" style="left:543px;top:76px;width:1px;height:517px;background:#fff;"></div>
<div class="a" style="left:247px;top:592px;width:297px;height:1px;background:#fff;"></div>
<div class="a" style="left:247px;top:76px;width:296px;height:24px;background:#21a03c;"></div>
<div class="a" style="left:252px;top:80px;width:15px;height:15px;background:#e4ece4;border:1px solid #7a7078"></div>
<svg style="left:252px;top:80px" width="15" height="15"><path d="M4 9 L7 6 L10 9Z" fill="#000"/></svg>
<div class="t" style="left:271px;top:82px;color:#f2f6e4;letter-spacing:-0.1px">General Information</div>
<div class="a" style="left:251px;top:104px;width:288px;height:401px;background:#fff;"></div>
<div class="a" style="left:251px;top:104px;width:118px;height:22px;background:#e0e8de;border:1px solid #6e6e6e;box-shadow:inset 1px 1px #eef4ee,inset -1px -1px #eef4ee"></div>
<div class="t" style="left:257px;top:108px;">Name</div>
<div class="a" style="left:369px;top:104px;width:154px;height:22px;border-right:1px solid #e0e6e0;border-bottom:1px solid #e0e6e0"></div>
<div class="t" style="left:375px;top:108px;width:146px;overflow:hidden">TS-Bead_immo_xy-scan_Dual Focus.ptu</div>
<div class="a" style="left:251px;top:126px;width:118px;height:22px;background:#e0e8de;border:1px solid #6e6e6e;box-shadow:inset 1px 1px #eef4ee,inset -1px -1px #eef4ee"></div>
<div class="t" style="left:257px;top:130px;">Type</div>
<div class="a" style="left:369px;top:126px;width:154px;height:22px;border-right:1px solid #e0e6e0;border-bottom:1px solid #e0e6e0"></div>
<div class="t" style="left:375px;top:130px;width:146px;overflow:hidden">TTTRFile</div>
<div class="a" style="left:251px;top:148px;width:118px;height:22px;background:#e0e8de;border:1px solid #6e6e6e;box-shadow:inset 1px 1px #eef4ee,inset -1px -1px #eef4ee"></div>
<div class="t" style="left:257px;top:152px;">Date</div>
<div class="a" style="left:369px;top:148px;width:154px;height:22px;border-right:1px solid #e0e6e0;border-bottom:1px solid #e0e6e0"></div>
<div class="t" style="left:375px;top:152px;width:146px;overflow:hidden">2012-06-29 10:55:36</div>
<div class="a" style="left:251px;top:170px;width:118px;height:22px;background:#e0e8de;border:1px solid #6e6e6e;box-shadow:inset 1px 1px #eef4ee,inset -1px -1px #eef4ee"></div>
<div class="t" style="left:257px;top:174px;">Acquisition time</div>
<div class="a" style="left:369px;top:170px;width:154px;height:22px;border-right:1px solid #e0e6e0;border-bottom:1px solid #e0e6e0"></div>
<div class="t" style="left:375px;top:174px;width:146px;overflow:hidden">00:01:24</div>
<div class="a" style="left:251px;top:192px;width:118px;height:22px;background:#e0e8de;border:1px solid #6e6e6e;box-shadow:inset 1px 1px #eef4ee,inset -1px -1px #eef4ee"></div>
<div class="t" style="left:257px;top:196px;">TCSPC Mode</div>
<div class="a" style="left:369px;top:192px;width:154px;height:22px;border-right:1px solid #e0e6e0;border-bottom:1px solid #e0e6e0"></div>
<div class="t" style="left:375px;top:196px;width:146px;overflow:hidden">T3</div>
<div class="a" style="left:251px;top:214px;width:118px;height:22px;background:#e0e8de;border:1px solid #6e6e6e;box-shadow:inset 1px 1px #eef4ee,inset -1px -1px #eef4ee"></div>
<div class="t" style="left:257px;top:218px;">Measurement mode</div>
<div class="a" style="left:369px;top:214px;width:154px;height:22px;border-right:1px solid #e0e6e0;border-bottom:1px solid #e0e6e0"></div>
<div class="t" style="left:375px;top:218px;width:146px;overflow:hidden">Image</div>
<div class="a" style="left:251px;top:236px;width:118px;height:22px;background:#e0e8de;border:1px solid #6e6e6e;box-shadow:inset 1px 1px #eef4ee,inset -1px -1px #eef4ee"></div>
<div class="t" style="left:257px;top:240px;">Number of Pixels</div>
<div class="a" style="left:369px;top:236px;width:154px;height:22px;border-right:1px solid #e0e6e0;border-bottom:1px solid #e0e6e0"></div>
<div class="t" style="left:375px;top:240px;width:146px;overflow:hidden">200 x 200</div>
<div class="a" style="left:251px;top:258px;width:118px;height:22px;background:#e0e8de;border:1px solid #6e6e6e;box-shadow:inset 1px 1px #eef4ee,inset -1px -1px #eef4ee"></div>
<div class="t" style="left:257px;top:262px;">Scan direction</div>
<div class="a" style="left:369px;top:258px;width:154px;height:22px;border-right:1px solid #e0e6e0;border-bottom:1px solid #e0e6e0"></div>
<div class="t" style="left:375px;top:262px;width:146px;overflow:hidden">x - y</div>
<div class="a" style="left:251px;top:280px;width:118px;height:22px;background:#e0e8de;border:1px solid #6e6e6e;box-shadow:inset 1px 1px #eef4ee,inset -1px -1px #eef4ee"></div>
<div class="t" style="left:257px;top:284px;">StartPoint (x, y)</div>
<div class="a" style="left:369px;top:280px;width:154px;height:22px;border-right:1px solid #e0e6e0;border-bottom:1px solid #e0e6e0"></div>
<div class="t" style="left:375px;top:284px;width:146px;overflow:hidden">83.15 µm, 68.95 µm</div>
<div class="a" style="left:251px;top:302px;width:118px;height:22px;background:#e0e8de;border:1px solid #6e6e6e;box-shadow:inset 1px 1px #eef4ee,inset -1px -1px #eef4ee"></div>
<div class="t" style="left:257px;top:306px;">Image Size</div>
<div class="a" style="left:369px;top:302px;width:154px;height:22px;border-right:1px solid #e0e6e0;border-bottom:1px solid #e0e6e0"></div>
<div class="t" style="left:375px;top:306px;width:146px;overflow:hidden">3.00 µm x 3.00 µm</div>
<div class="a" style="left:251px;top:324px;width:118px;height:22px;background:#e0e8de;border:1px solid #6e6e6e;box-shadow:inset 1px 1px #eef4ee,inset -1px -1px #eef4ee"></div>
<div class="t" style="left:257px;top:328px;">Dwell Time</div>
<div class="a" style="left:369px;top:324px;width:154px;height:22px;border-right:1px solid #e0e6e0;border-bottom:1px solid #e0e6e0"></div>
<div class="t" style="left:375px;top:328px;width:146px;overflow:hidden">3.0 ms</div>
<div class="a" style="left:251px;top:346px;width:118px;height:22px;background:#e0e8de;border:1px solid #6e6e6e;box-shadow:inset 1px 1px #eef4ee,inset -1px -1px #eef4ee"></div>
<div class="t" style="left:257px;top:350px;">Scanning pattern</div>
<div class="a" style="left:369px;top:346px;width:154px;height:22px;border-right:1px solid #e0e6e0;border-bottom:1px solid #e0e6e0"></div>
<div class="t" style="left:375px;top:350px;width:146px;overflow:hidden">Monodirectional</div>
<div class="a" style="left:251px;top:368px;width:118px;height:22px;background:#e0e8de;border:1px solid #6e6e6e;box-shadow:inset 1px 1px #eef4ee,inset -1px -1px #eef4ee"></div>
<div class="t" style="left:257px;top:372px;">Stop after</div>
<div class="a" style="left:369px;top:368px;width:154px;height:22px;border-right:1px solid #e0e6e0;border-bottom:1px solid #e0e6e0"></div>
<div class="t" style="left:375px;top:372px;width:146px;overflow:hidden">00:01:24</div>
<div class="a" style="left:251px;top:390px;width:118px;height:22px;background:#e0e8de;border:1px solid #6e6e6e;box-shadow:inset 1px 1px #eef4ee,inset -1px -1px #eef4ee"></div>
<div class="t" style="left:257px;top:394px;">Stop Reason</div>
<div class="a" style="left:369px;top:390px;width:154px;height:22px;border-right:1px solid #e0e6e0;border-bottom:1px solid #e0e6e0"></div>
<div class="t" style="left:375px;top:394px;width:146px;overflow:hidden">Time over</div>
<div class="a" style="left:369px;top:104px;width:153px;height:1px;background:repeating-linear-gradient(90deg,#000 0 1px,#20e040 1px 2px)"></div>
<div class="a" style="left:369px;top:124px;width:153px;height:1px;background:repeating-linear-gradient(90deg,#000 0 1px,#20e040 1px 2px)"></div>
<div class="a" style="left:369px;top:104px;width:1px;height:21px;background:repeating-linear-gradient(180deg,#000 0 1px,#20e040 1px 2px)"></div>
<div class="a" style="left:521px;top:104px;width:1px;height:21px;background:repeating-linear-gradient(180deg,#000 0 1px,#20e040 1px 2px)"></div>
<div class="a" style="left:544px;top:76px;width:3px;height:518px;background:#6e6e6e;"></div>
<div class="a" style="left:547px;top:76px;width:56px;height:20px;background:#21a03c;border-left:2px solid #000;border-right:2px solid #000"></div>
<div class="t" style="left:553px;top:78px;color:#f2f6e4;letter-spacing:-0.45px">Comment</div>
<div class="a" style="left:603px;top:76px;width:47px;height:20px;background:#e0e8de;border-right:1px solid #6e6e6e;box-shadow:inset 1px 1px #f4faf4,inset -1px 0 #f4faf4"></div>
<div class="t" style="left:609px;top:79px;letter-spacing:-0.1px">Header</div>
<div class="a" style="left:547px;top:95px;width:396px;height:499px;background:#e8f2e8;border-top:2px solid #6e6e6e;border-right:2px solid #6e6e6e;border-bottom:2px solid #6e6e6e"></div>
<div class="a" style="left:549px;top:99px;width:390px;height:491px;background:#fff;border:1px solid #6e6e6e"></div>
<div class="t" style="left:555px;top:103px;letter-spacing:-0.1px">Created on 2/21/2007 12:49:11 PM</div>
<div class="t" style="left:555px;top:117px;letter-spacing:-0.1px">Z-Scan at:</div>
<div class="t" style="left:603px;top:131px;letter-spacing:0">82</div>
<div class="t" style="left:603px;top:145px;letter-spacing:0">0</div>
<div class="t" style="left:603px;top:159px;letter-spacing:0">0</div>
<div class="a" style="left:920px;top:101px;width:17px;height:487px;background:#d0d8ce;border-left:1px solid #b4c0c4;border-right:1px solid #b4c0c4"></div>
<div class="a" style="left:920px;top:101px;width:17px;height:17px;background:#d4dcd2;border:1px solid #6e6e6e;border-radius:1px"></div>
<svg style="left:920px;top:101px" width="17" height="17"><path d="M4.5 10 L8.5 6 L12.5 10Z" fill="#a8b0b0"/></svg>
<div class="a" style="left:920px;top:571px;width:17px;height:17px;background:#d4dcd2;border:1px solid #6e6e6e;border-radius:1px"></div>
<svg style="left:920px;top:571px" width="17" height="17"><path d="M4.5 7 L8.5 11 L12.5 7Z" fill="#a8b0b0"/></svg>
</body></html>
